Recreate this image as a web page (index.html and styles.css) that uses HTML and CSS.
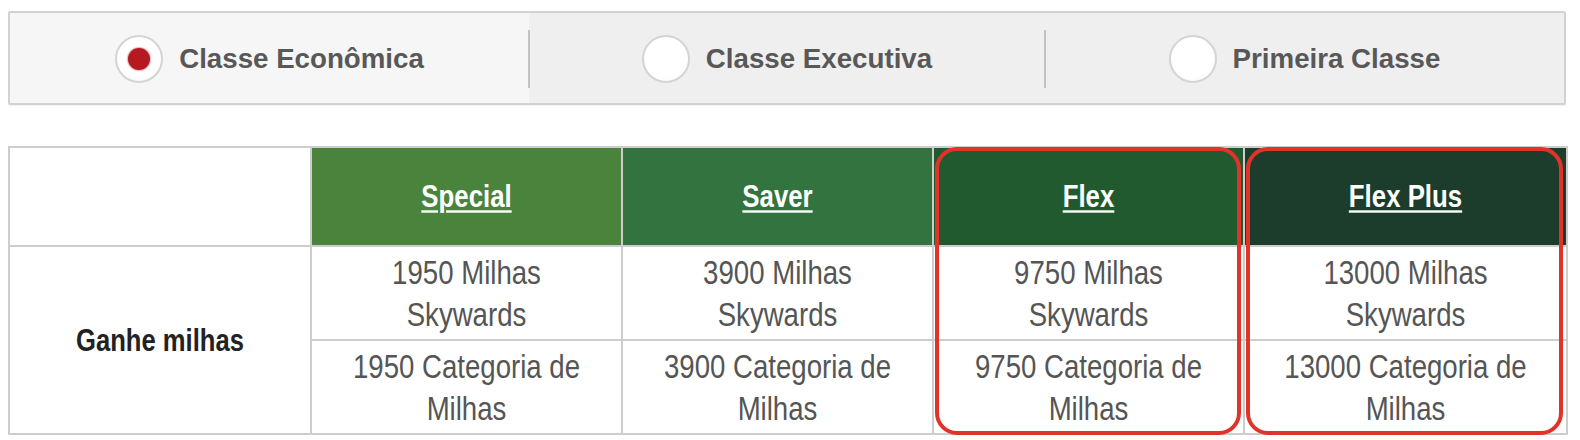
FILE: index.html
```html
<!DOCTYPE html>
<html lang="pt">
<head>
<meta charset="utf-8">
<title>Classes</title>
<link rel="stylesheet" href="styles.css">
</head>
<body>
<div class="page">
  <div class="tabs">
    <div class="tab tab-active">
      <span class="radio radio-on"><span class="dot"></span></span>
      <span class="tab-label">Classe Econômica</span>
    </div>
    <div class="tab">
      <span class="radio"></span>
      <span class="tab-label">Classe Executiva</span>
    </div>
    <div class="tab tab-last">
      <span class="radio"></span>
      <span class="tab-label">Primeira Classe</span>
    </div>
  </div>

  <div class="table-wrap">
    <table class="fares">
      <colgroup>
        <col class="c-label">
        <col class="c-fare">
        <col class="c-fare">
        <col class="c-fare">
        <col class="c-last">
      </colgroup>
      <thead>
        <tr class="head-row">
          <th class="blank"></th>
          <th class="fare-head h-special"><a class="tall" href="#">Special</a></th>
          <th class="fare-head h-saver"><a class="tall" href="#">Saver</a></th>
          <th class="fare-head h-flex"><a class="tall" href="#">Flex</a></th>
          <th class="fare-head h-flexplus"><a class="tall" href="#">Flex Plus</a></th>
        </tr>
      </thead>
      <tbody>
        <tr class="body-row">
          <th class="row-label" rowspan="2"><span class="tall">Ganhe milhas</span></th>
          <td><div class="cell-text">1950 Milhas Skywards</div></td>
          <td><div class="cell-text">3900 Milhas Skywards</div></td>
          <td><div class="cell-text">9750 Milhas Skywards</div></td>
          <td><div class="cell-text">13000 Milhas Skywards</div></td>
        </tr>
        <tr class="body-row">
          <td><div class="cell-text">1950 Categoria de Milhas</div></td>
          <td><div class="cell-text">3900 Categoria de Milhas</div></td>
          <td><div class="cell-text">9750 Categoria de Milhas</div></td>
          <td><div class="cell-text">13000 Categoria de Milhas</div></td>
        </tr>
      </tbody>
    </table>
    <div class="highlight hl-flex"></div>
    <div class="highlight hl-flexplus"></div>
  </div>
</div>
</body>
</html>
```

FILE: styles.css
```css
* { box-sizing: border-box; }

html, body {
  margin: 0;
  padding: 0;
  background: #ffffff;
}

.page {
  padding: 11px 0 0 8px;
  font-family: "Liberation Sans", Arial, Helvetica, sans-serif;
}

/* ---------- tabs ---------- */
.tabs {
  width: 1558px;
  height: 94px;
  display: grid;
  grid-template-columns: 519px 516px 1fr;
  border: 2px solid #d2d2d2;
  border-radius: 2px;
  background: #efefef;
  box-shadow: 0 1px 1px rgba(0,0,0,0.06);
}

.tab {
  display: flex;
  align-items: center;
  justify-content: center;
  gap: 16px;
  position: relative;
  padding-top: 2px;
}

.tab-active {
  background: #f6f6f6;
}

.tab + .tab::before {
  content: "";
  position: absolute;
  left: -1px;
  top: 17px;
  height: 58px;
  width: 2px;
  background: #c2c2c2;
}

.radio {
  width: 48px;
  height: 48px;
  border-radius: 50%;
  border: 2px solid #d4d4d4;
  background: radial-gradient(circle at 50% 40%, #ffffff 60%, #f7f7f7 100%);
  display: flex;
  align-items: center;
  justify-content: center;
  flex: none;
}

.dot {
  width: 22px;
  height: 22px;
  border-radius: 50%;
  background: #b51a22;
  box-shadow: 0 0 1px 1px rgba(181, 26, 34, 0.35);
}

.tab-label {
  font-size: 27.7px;
  font-weight: 700;
  color: #585858;
}

/* ---------- table ---------- */
.table-wrap {
  position: relative;
  width: 1558px;
  margin-top: 41px;
}

.fares {
  width: 1558px;
  table-layout: fixed;
  border-collapse: collapse;
}

.c-label { width: 302px; }
.c-fare { width: 311px; }
.c-last { width: 323px; }

.fares th,
.fares td {
  border: 2px solid #cdcdcd;
  text-align: center;
  vertical-align: middle;
  padding: 0 20px;
}

.head-row { height: 99px; }
.body-row { height: 94px; }

.tall {
  display: inline-block;
  transform: scaleY(1.2);
}

.fare-head {
  border-color: #c5d3c5;
}

.fare-head a {
  color: #ffffff;
  font-size: 25.8px;
  font-weight: 700;
  text-decoration: underline;
  text-underline-offset: 3px;
  text-decoration-thickness: 2px;
}

.h-special { background: #4a843c; }
.h-saver { background: #327340; }
.h-flex { background: #225a30; }
.h-flexplus { background: #1c3d2b; }

.blank { background: #ffffff; }

.row-label {
  font-size: 25.6px;
  font-weight: 700;
  color: #222222;
}

.fares td {
  color: #555555;
  padding-top: 2px;
}

.cell-text {
  font-size: 27.6px;
  line-height: 35px;
  transform: scaleY(1.2);
}

/* ---------- annotation highlights ---------- */
.highlight {
  position: absolute;
  top: 1px;
  height: 288px;
  border: 4px solid #e2332a;
  border-radius: 22px;
  pointer-events: none;
}

.hl-flex {
  left: 927px;
  width: 306px;
}

.hl-flexplus {
  left: 1238px;
  width: 317px;
}
```
